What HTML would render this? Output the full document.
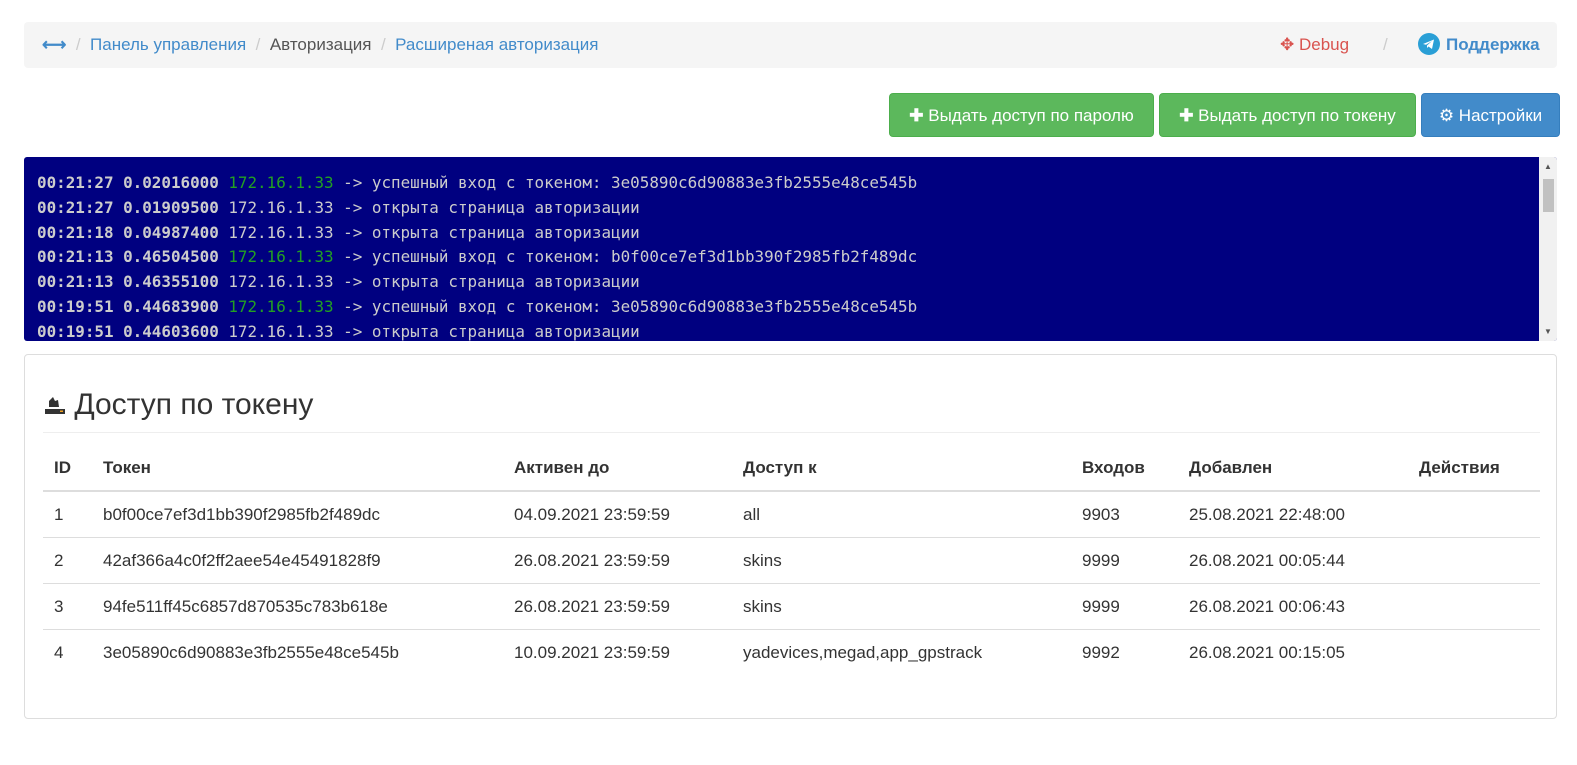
<!DOCTYPE html>
<html><head><meta charset="utf-8"><style>
body{margin:0;width:1577px;height:765px;background:#fff;font-family:"Liberation Sans",Arial,sans-serif;font-size:17px;color:#333;overflow:hidden;position:relative}
.abs{position:absolute}
.bc{left:24px;top:22px;width:1533px;height:46px;background:#f5f5f5;border-radius:4px}
a{color:#428bca;text-decoration:none}
.sep{color:#ccc}
.btn{position:absolute;top:93px;height:44px;border-radius:4px;color:#fff;font-size:17px;line-height:44px;text-align:center;white-space:nowrap}
.g{background:#5cb85c;border:1px solid #4cae4c;box-sizing:border-box}
.b{background:#428bca;border:1px solid #357ebd;box-sizing:border-box}
.log{left:24px;top:157px;width:1533px;height:184px;background:#000080;border-radius:3px;overflow:hidden}
.log pre{margin:0;position:absolute;left:13px;top:14px;font-family:"DejaVu Sans Mono",monospace;font-size:15.9px;line-height:24.8px;color:#ccc}
.log b{font-weight:bold}
.gr{color:#22a022}
.sb{position:absolute;right:0;top:0;width:18px;height:184px;background:#f1f1f1}
.panel{left:24px;top:354px;width:1533px;height:365px;border:1px solid #ddd;border-radius:4px;box-sizing:border-box}
table{position:absolute;left:43px;top:445px;width:1497px;border-collapse:collapse}
td,th{text-align:left;padding:0 0 0 11px;height:45px;font-size:17px;border-top:1px solid #ddd;white-space:nowrap}
th{font-weight:bold;border-top:none;border-bottom:2px solid #ddd;height:45px}
</style></head><body>
<div class="abs bc"></div>
<div class="abs" style="left:42px;top:35px;line-height:20px">
<span style="color:#428bca;font-weight:bold">⟷</span>&nbsp; <span class="sep">/</span>&nbsp; <a>Панель управления</a>&nbsp; <span class="sep">/</span>&nbsp; <span style="color:#555">Авторизация</span>&nbsp; <span class="sep">/</span>&nbsp; <a>Расширеная авторизация</a></div>
<div class="abs" style="left:1280px;top:35px;line-height:20px;color:#d9534f">✥ Debug</div>
<div class="abs sep" style="left:1383px;top:35px;line-height:20px">/</div>
<div class="abs" style="left:1418px;top:33px;width:22px;height:22px;border-radius:50%;background:#2a9fd6"><svg width="22" height="22" viewBox="0 0 22 22"><path d="M5 11 L16 6.5 L14 16 L10.5 13.5 L9 15 L9 12.5 L14 8 L8 11.8 Z" fill="#fff"/></svg></div>
<div class="abs" style="left:1446px;top:35px;line-height:20px;color:#428bca;font-weight:bold">Поддержка</div>
<div class="btn g" style="left:889px;width:265px"><b>✚</b> Выдать доступ по паролю</div>
<div class="btn g" style="left:1159px;width:257px"><b>✚</b> Выдать доступ по токену</div>
<div class="btn b" style="left:1421px;width:139px">⚙ Настройки</div>
<div class="abs log"><pre><b>00:21:27 0.02016000</b> <span class="gr">172.16.1.33</span> -&gt; успешный вход с токеном: 3e05890c6d90883e3fb2555e48ce545b
<b>00:21:27 0.01909500</b> 172.16.1.33 -&gt; открыта страница авторизации
<b>00:21:18 0.04987400</b> 172.16.1.33 -&gt; открыта страница авторизации
<b>00:21:13 0.46504500</b> <span class="gr">172.16.1.33</span> -&gt; успешный вход с токеном: b0f00ce7ef3d1bb390f2985fb2f489dc
<b>00:21:13 0.46355100</b> 172.16.1.33 -&gt; открыта страница авторизации
<b>00:19:51 0.44683900</b> <span class="gr">172.16.1.33</span> -&gt; успешный вход с токеном: 3e05890c6d90883e3fb2555e48ce545b
<b>00:19:51 0.44603600</b> 172.16.1.33 -&gt; открыта страница авторизации</pre>
<div class="sb"><div style="position:absolute;left:4px;top:22px;width:11px;height:33px;background:#c1c1c1"></div><div style="position:absolute;left:5px;top:5px;font-size:8px;color:#555">▲</div><div style="position:absolute;left:5px;bottom:5px;font-size:8px;color:#555">▼</div></div></div>
<div class="abs panel"></div>
<div class="abs" style="left:44px;top:388px;font-size:30px;line-height:34px;color:#333"><svg width="22" height="22" viewBox="0 0 22 22" style="vertical-align:-1px"><path d="M4 3 L6 1 M5 8 L9 4 L11 8 L14 7 L15 14 L5 14 Z" fill="#333"/><rect x="1" y="16" width="20" height="5" fill="#333"/><rect x="16" y="17.5" width="3" height="1.5" fill="#f0a020"/></svg> Доступ по токену</div>
<div class="abs" style="left:43px;top:432px;width:1497px;height:1px;background:#eee"></div>
<table>
<tr><th style="width:38px">ID</th><th style="width:400px">Токен</th><th style="width:218px">Активен до</th><th style="width:328px">Доступ к</th><th style="width:96px">Входов</th><th style="width:219px">Добавлен</th><th>Действия</th></tr>
<tr><td>1</td><td>b0f00ce7ef3d1bb390f2985fb2f489dc</td><td>04.09.2021 23:59:59</td><td>all</td><td>9903</td><td>25.08.2021 22:48:00</td><td></td></tr>
<tr><td>2</td><td>42af366a4c0f2ff2aee54e45491828f9</td><td>26.08.2021 23:59:59</td><td>skins</td><td>9999</td><td>26.08.2021 00:05:44</td><td></td></tr>
<tr><td>3</td><td>94fe511ff45c6857d870535c783b618e</td><td>26.08.2021 23:59:59</td><td>skins</td><td>9999</td><td>26.08.2021 00:06:43</td><td></td></tr>
<tr><td>4</td><td>3e05890c6d90883e3fb2555e48ce545b</td><td>10.09.2021 23:59:59</td><td>yadevices,megad,app_gpstrack</td><td>9992</td><td>26.08.2021 00:15:05</td><td></td></tr>
</table>
</body></html>
